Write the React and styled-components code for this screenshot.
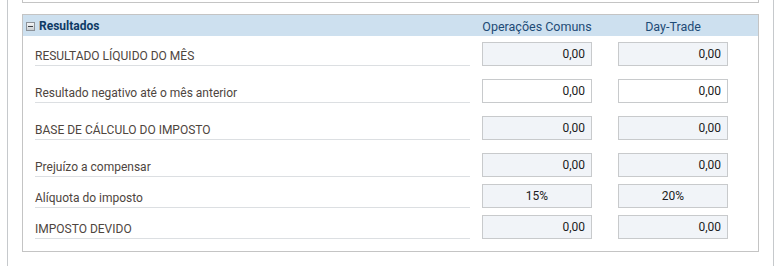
import React from 'react';
import styled, { createGlobalStyle } from 'styled-components';

const GlobalStyle = createGlobalStyle`
  html, body {
    margin: 0;
    padding: 0;
    background: #ffffff;
    font-family: Roboto, "Liberation Sans", Arial, sans-serif;
    overflow: hidden;
  }
`;

const Page = styled.div`
  padding-left: 7px;
  height: 266px;
`;

const Panel = styled.div`
  width: 767px;
  height: 266px;
  border-left: 1px solid #c6c9cc;
  border-right: 1px solid #c6c9cc;
  padding: 0 14px;
  box-sizing: border-box;
`;

const PrevBox = styled.div`
  height: 3px;
  border: 1px solid #c4c4c4;
  border-top: none;
  box-sizing: border-box;
  margin-bottom: 11px;
`;

const Box = styled.div`
  border: 1px solid #c4c4c4;
  padding-bottom: 12px;
`;

const Header = styled.div`
  display: flex;
  align-items: center;
  height: 20px;
  padding-top: 1px;
  background: #cde0ef;
`;

const Title = styled.div`
  width: 459px;
  display: flex;
  align-items: center;
  gap: 4px;
  padding-left: 3px;
  box-sizing: border-box;
  font-size: 12px;
  font-weight: bold;
  color: #0d3a64;
`;

const Toggle = styled.span`
  width: 9px;
  height: 9px;
  box-sizing: border-box;
  border: 1px solid #8c9299;
  background: linear-gradient(#f4f5f6, #c9ced3);
  display: flex;
  align-items: center;
  justify-content: center;
  &::after {
    content: '';
    width: 5px;
    height: 1px;
    background: #3c4046;
  }
`;

const Columns = styled.div`
  display: flex;
  gap: 26px;
`;

const ColumnTitle = styled.div`
  width: 110px;
  text-align: center;
  font-size: 12.5px;
  color: #1e4b76;
`;

const Row = styled.div`
  display: flex;
  margin-top: ${p => p.$space}px;
  padding-left: 12px;
`;

const Label = styled.div`
  width: 435px;
  height: 24px;
  margin-right: 12px;
  box-sizing: border-box;
  display: flex;
  align-items: flex-end;
  padding-bottom: 1px;
  border-bottom: 1px solid #dcdfe2;
  font-size: 12px;
  line-height: 16px;
  color: #4e453e;
`;

const Field = styled.input`
  width: 110px;
  height: 24px;
  box-sizing: border-box;
  margin: 0;
  border: 1px solid #c8cacc;
  padding: 0 6px;
  background: ${p => (p.readOnly ? '#f1f4f8' : '#ffffff')};
  text-align: ${p => (p.$center ? 'center' : 'right')};
  font-family: Roboto, "Liberation Sans", Arial, sans-serif;
  font-size: 12px;
  color: #1c1c22;
  outline: none;
`;

const rows = [
  { label: 'RESULTADO LÍQUIDO DO MÊS', values: ['0,00', '0,00'], readOnly: true, space: 6 },
  { label: 'Resultado negativo até o mês anterior', values: ['0,00', '0,00'], readOnly: false, space: 13 },
  { label: 'BASE DE CÁLCULO DO IMPOSTO', values: ['0,00', '0,00'], readOnly: true, space: 13 },
  { label: 'Prejuízo a compensar', values: ['0,00', '0,00'], readOnly: true, space: 13 },
  { label: 'Alíquota do imposto', values: ['15%', '20%'], readOnly: true, space: 7, center: true },
  { label: 'IMPOSTO DEVIDO', values: ['0,00', '0,00'], readOnly: true, space: 7 },
];

export default function App() {
  return (
    <Page>
      <GlobalStyle />
      <Panel>
        <PrevBox />
        <Box>
          <Header>
            <Title>
              <Toggle />
              Resultados
            </Title>
            <Columns>
              <ColumnTitle>Operações Comuns</ColumnTitle>
              <ColumnTitle>Day-Trade</ColumnTitle>
            </Columns>
          </Header>
          {rows.map(row => (
            <Row key={row.label} $space={row.space}>
              <Label>{row.label}</Label>
              <Columns>
                {row.values.map((v, i) => (
                  <Field key={i} value={v} readOnly={row.readOnly} $center={row.center} onChange={() => {}} />
                ))}
              </Columns>
            </Row>
          ))}
        </Box>
      </Panel>
    </Page>
  );
}
